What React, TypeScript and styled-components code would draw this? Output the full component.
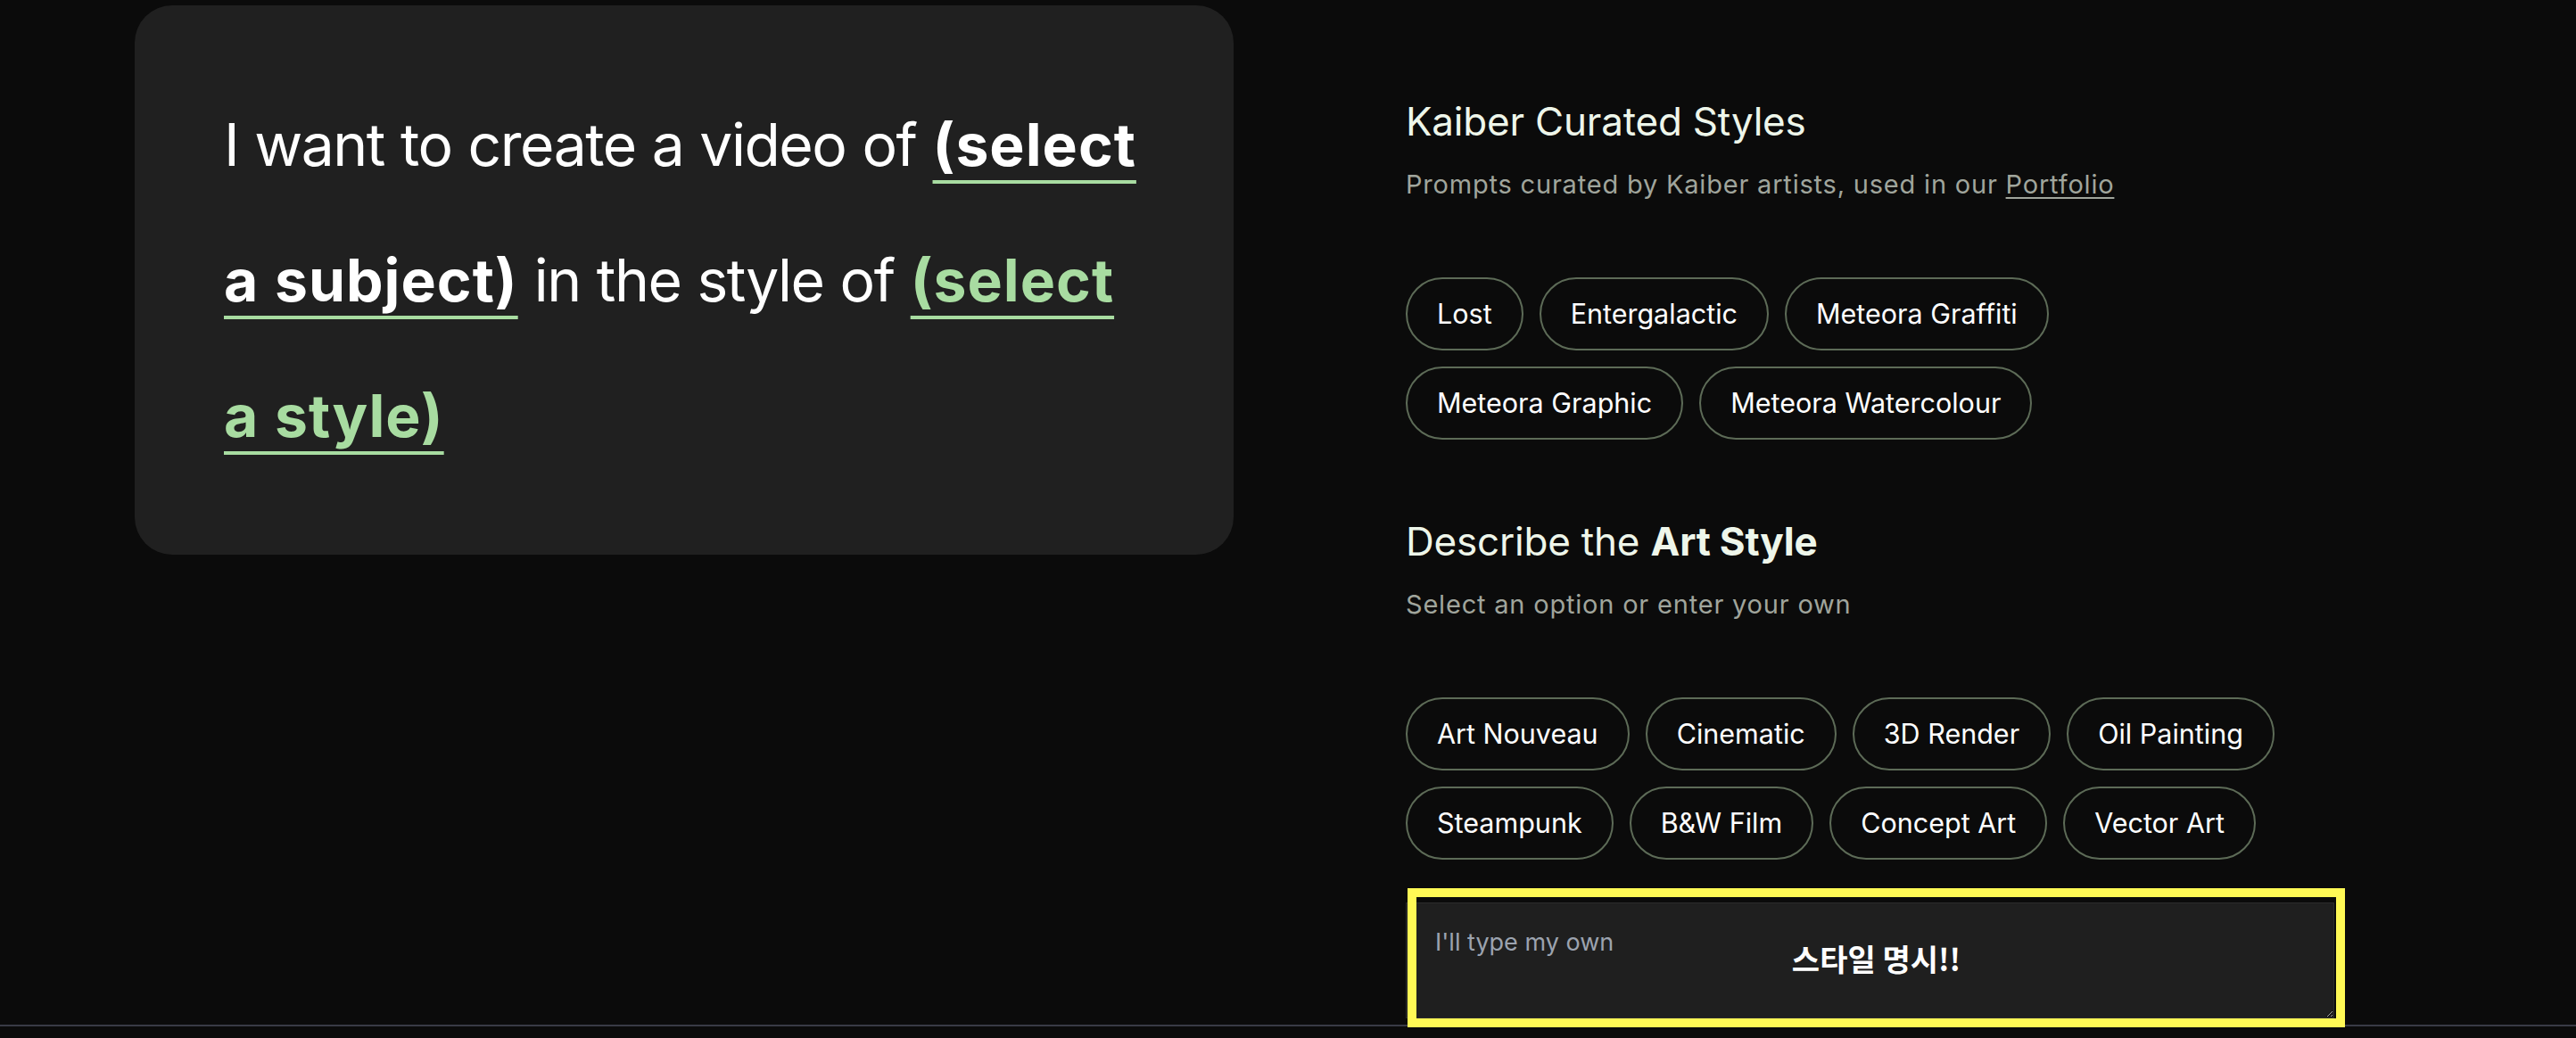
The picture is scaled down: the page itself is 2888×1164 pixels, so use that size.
import React from 'react'
import styled, { createGlobalStyle } from 'styled-components'

const GlobalStyle = createGlobalStyle`
  html, body {
    margin: 0;
    padding: 0;
    background: #0b0b0b;
  }
  body {
    font-family: Inter, "Noto Sans", "Noto Sans CJK KR", sans-serif;
    color: #ffffff;
  }
`

const Page = styled.div`
  min-height: 100vh;
  display: flex;
  flex-direction: column;
`

const Columns = styled.div`
  display: flex;
  align-items: flex-start;
  gap: 193px;
  padding: 6px 0 0 151px;
`

const PromptCard = styled.div`
  width: 1232px;
  box-sizing: border-box;
  padding: 80px 96px 80px 100px;
  background: #202020;
  border-radius: 42px;
`

const Sentence = styled.p`
  margin: 0;
  font-size: 66px;
  line-height: 152px;
  letter-spacing: -1.5px;
  word-spacing: 1px;
  color: #ffffff;
`

const Blank = styled.span<{ $filled?: boolean }>`
  font-weight: 700;
  letter-spacing: 1px;
  color: ${(p) => (p.$filled ? '#ffffff' : '#a8dca1')};
  text-decoration: underline;
  text-decoration-color: #a8dca1;
  text-decoration-thickness: 4px;
  text-underline-offset: 16px;
  text-decoration-skip-ink: none;
`

const Side = styled.div`
  width: 1041px;
  display: flex;
  flex-direction: column;
`

const Section = styled.section<{ $first?: boolean }>`
  margin-top: ${(p) => (p.$first ? '102px' : '86px')};
`

const Title = styled.h2`
  margin: 0;
  font-size: 44px;
  line-height: 56px;
  font-weight: 400;
  color: #eef6ea;
  letter-spacing: -0.2px;

  b {
    font-weight: 700;
  }
`

const Hint = styled.p`
  margin: 23px 0 0;
  font-size: 29px;
  line-height: 40px;
  letter-spacing: 0.8px;
  color: #a0a59c;

  a {
    color: inherit;
    text-decoration: underline;
    text-underline-offset: 4px;
  }
`

const ChipList = styled.div`
  margin-top: 84px;
  display: flex;
  flex-wrap: wrap;
  gap: 18px;
`

const Chip = styled.button`
  height: 82px;
  box-sizing: border-box;
  display: inline-flex;
  align-items: center;
  padding: 0 33px;
  border: 2px solid #5d6b57;
  border-radius: 999px;
  background: transparent;
  color: #ffffff;
  font-family: Inter, "Noto Sans", sans-serif;
  font-size: 30.5px;
  line-height: 36px;
  cursor: pointer;
`

const InputWrap = styled.div`
  position: relative;
  margin-top: 48px;
`

const OwnInput = styled.textarea`
  display: block;
  width: 100%;
  height: 130px;
  box-sizing: border-box;
  padding: 26px 32px;
  background: #1f1f1f;
  border: 1px solid #2c2c2c;
  border-radius: 0;
  color: #ffffff;
  font-family: Inter, "Noto Sans", sans-serif;
  font-size: 27px;
  line-height: 36px;
  color-scheme: dark;
  outline: none;

  &::placeholder {
    color: #9ca3af;
  }
`

const Callout = styled.div`
  position: absolute;
  left: 2px;
  top: -16px;
  right: -12px;
  bottom: -10px;
  border: 10px solid #fff955;
  display: flex;
  align-items: center;
  justify-content: center;
  pointer-events: none;
  font-family: "Noto Sans CJK KR", "Noto Sans", sans-serif;
  font-size: 34px;
  font-weight: 700;
  color: #ffffff;
`

const Footer = styled.div`
  margin-top: 7px;
  border-top: 2px solid #393b45;
  height: 40px;
`

const curated = ['Lost', 'Entergalactic', 'Meteora Graffiti', 'Meteora Graphic', 'Meteora Watercolour']
const artStyles = [
  'Art Nouveau',
  'Cinematic',
  '3D Render',
  'Oil Painting',
  'Steampunk',
  'B&W Film',
  'Concept Art',
  'Vector Art',
]

const App = () => {
  return (
    <Page>
      <GlobalStyle />
      <Columns>
        <PromptCard>
          <Sentence>
            I want to create a video of <Blank $filled>(select a subject)</Blank> in the style
            of <Blank>(select a style)</Blank>
          </Sentence>
        </PromptCard>

        <Side>
          <Section $first>
            <Title>Kaiber Curated Styles</Title>
            <Hint>
              Prompts curated by Kaiber artists, used in our <a href="#portfolio">Portfolio</a>
            </Hint>
            <ChipList>
              {curated.map((name) => (
                <Chip key={name}>{name}</Chip>
              ))}
            </ChipList>
          </Section>

          <Section>
            <Title>
              Describe the <b>Art Style</b>
            </Title>
            <Hint>Select an option or enter your own</Hint>
            <ChipList>
              {artStyles.map((name) => (
                <Chip key={name}>{name}</Chip>
              ))}
            </ChipList>
            <InputWrap>
              <OwnInput placeholder="I'll type my own" />
              {/* annotation box drawn over the input */}
              <Callout>스타일 명시!!</Callout>
            </InputWrap>
          </Section>
        </Side>
      </Columns>
      <Footer />
    </Page>
  )
}

export default App
